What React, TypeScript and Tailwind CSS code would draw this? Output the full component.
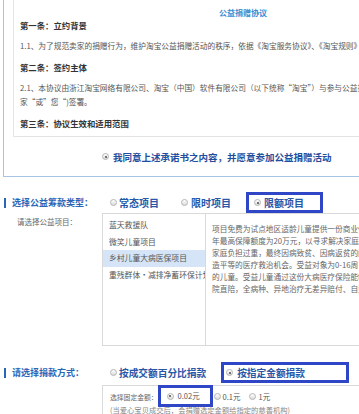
import React from "react";

function Radio({ checked }: { checked?: boolean }) {
  return (
    <span className="relative inline-block w-[7px] h-[7px] shrink-0 rounded-full border border-[#b4b4b4] bg-linear-to-b from-white to-[#dcdcdc]">
      {checked && <span className="absolute inset-[1.5px] rounded-full bg-[#4a4a4a]" />}
    </span>
  );
}

function SectionTitle({ text }: { text: string }) {
  return (
    <div className="w-[108px] shrink-0 flex items-center pl-[4px]">
      <span className="w-[2px] h-[10px] bg-[#2a66b8]" />
      <span className="ml-[6px] text-[9px] leading-[12px] font-bold text-[#2a66b8] whitespace-nowrap">{text}</span>
    </div>
  );
}

const descLines = [
  "项目免费为试点地区适龄儿童提供一份商业保险，",
  "年最高保障额度为20万元，以寻求解决家庭因",
  "家庭负担过重，最终因病致贫、因病返贫的问题",
  "造平等的医疗救治机会。受益对象为0-16周岁",
  "的儿童。受益儿童通过这份大病医疗保险能够获",
  "院直陪，全病种、异地治疗无差异赔付、自费药",
];

const listItems = ["蓝天救援队", "微笑儿童项目", "乡村儿童大病医保项目", "重残群体·减排净蓄环保计划"];

export default function App() {
  return (
    <div className="w-[359px] h-[414px] overflow-hidden bg-white font-['Noto_Sans_CJK_SC','Liberation_Sans',sans-serif]">
      {/* Agreement frame */}
      <div className="w-[470px] h-[177px] ml-[3px] border-l border-b border-[#a8c4e4] pl-[9px] flex flex-col">
        <div className="h-[137px] shrink-0 border-l border-b border-[#e4e4e4] pl-[6px] pt-[7px] whitespace-nowrap text-[#555]">
          <div className="h-[11px] leading-[11px] text-[8px] font-bold text-[#3b8bd0] pl-[199px]">公益捐赠协议</div>
          <div className="h-[14px] leading-[14px] text-[8.4px] font-bold text-[#333]">第一条：立约背景</div>
          <div className="mt-[7px] h-[14px] leading-[14px] text-[7.7px]">
            1.1、为了规范卖家的捐赠行为，维护淘宝公益捐赠活动的秩序，依据《淘宝服务协议》、《淘宝规则》等
          </div>
          <div className="mt-[7px] h-[14px] leading-[14px] text-[8.4px] font-bold text-[#333]">第二条：签约主体</div>
          <div className="mt-[7px] h-[14px] leading-[14px] text-[7.7px]">
            2.1、本协议由浙江淘宝网络有限公司、淘宝（中国）软件有限公司（以下统称“淘宝”）与参与公益捐赠活动的卖
          </div>
          <div className="h-[14px] leading-[14px] text-[7.7px]">家“或”您“)签署。</div>
          <div className="mt-[7px] h-[14px] leading-[14px] text-[8.4px] font-bold text-[#333]">第三条：协议生效和适用范围</div>
        </div>
        <div className="h-[39px] flex items-center pl-[89px] whitespace-nowrap">
          <Radio checked />
          <span className="ml-[4px] text-[9.5px] leading-[12px] font-bold text-[#1f4e9e]">
            我同意上述承诺书之内容，并愿意参加公益捐赠活动
          </span>
          <span className="ml-[31px]">
            <Radio />
          </span>
        </div>
      </div>

      {/* Section 2: project type */}
      <div className="mt-[15px] h-[21px] flex items-center whitespace-nowrap">
        <SectionTitle text="选择公益筹款类型：" />
        <span className="ml-[2px] flex items-center">
          <Radio />
          <span className="ml-[2px] text-[10px] leading-[12px] font-bold text-[#2857a8]">常态项目</span>
        </span>
        <span className="ml-[22px] flex items-center">
          <Radio />
          <span className="ml-[3px] text-[10px] leading-[12px] font-bold text-[#2857a8]">限时项目</span>
        </span>
        <span className="ml-[15px] w-[77px] h-[21px] shrink-0 border-[3px] border-[#2f47c6] flex items-center pl-[5px]">
          <Radio checked />
          <span className="ml-[3px] text-[10px] leading-[12px] font-bold text-[#2857a8]">限额项目</span>
        </span>
      </div>

      <div className="flex">
        <div className="w-[102px] shrink-0 pl-[17px] pt-[4px] text-[7.5px] leading-[10px] text-[#666] whitespace-nowrap">
          请选择公益项目：
        </div>
        <div className="w-[320px] h-[133px] shrink-0 border border-[#d9d9d9] flex">
          <div className="w-[103px] shrink-0 border-r border-[#d9d9d9] pt-[3px] overflow-hidden">
            {listItems.map((t, i) => (
              <div
                key={t}
                className={
                  "h-[16.5px] leading-[16.5px] pl-[6px] text-[7.8px] text-[#555] whitespace-nowrap overflow-hidden " +
                  (i === 2 ? "bg-[#d5e5f7]" : "")
                }
              >
                {t}
              </div>
            ))}
          </div>
          <div className="flex-1 pl-[6px] pt-[9px] overflow-hidden">
            {descLines.map((l) => (
              <div key={l} className="h-[12px] leading-[12px] text-[7.7px] text-[#666] whitespace-nowrap">
                {l}
              </div>
            ))}
          </div>
        </div>
      </div>

      {/* Section 3: donation method */}
      <div className="mt-[16px] h-[21px] flex items-center whitespace-nowrap">
        <SectionTitle text="请选择捐款方式：" />
        <span className="ml-[2px] flex items-center">
          <Radio />
          <span className="ml-[2px] text-[9.7px] leading-[12px] font-bold text-[#2857a8]">按成交额百分比捐款</span>
        </span>
        <span className="ml-[15px] w-[128px] h-[21px] shrink-0 border-[3px] border-[#2f47c6] flex items-center pl-[2px]">
          <Radio checked />
          <span className="ml-[4px] text-[9.7px] leading-[12px] font-bold text-[#2857a8]">按指定金额捐款</span>
        </span>
      </div>

      <div className="mt-[2px] flex">
        <div className="w-[102px] shrink-0" />
        <div className="w-[320px] h-[40px] shrink-0 border-l border-t border-[#d9d9d9] pl-[7px] whitespace-nowrap">
          <div className="h-[21px] flex items-center text-[#555]">
            <span className="text-[6.8px] leading-[10px] text-[#666]">选择固定金额：</span>
            <span className="w-[55px] h-[22px] -mt-[1px] shrink-0 border-[3px] border-[#2f47c6] flex items-center pl-[6px]">
              <Radio checked />
              <span className="ml-[4px] text-[7.5px] leading-[10px]">0.02元</span>
            </span>
            <span className="ml-[1px] flex items-center">
              <Radio />
              <span className="ml-[2px] text-[7.5px] leading-[10px]">0.1元</span>
            </span>
            <span className="ml-[8px] flex items-center">
              <Radio />
              <span className="ml-[3px] text-[7.5px] leading-[10px]">1元</span>
            </span>
          </div>
          <div className="-mt-[2px] h-[10px] leading-[10px] text-[7.3px] text-[#888]">
            (当爱心宝贝成交后，会捐赠选定金额给指定的慈善机构)
          </div>
        </div>
      </div>
    </div>
  );
}
